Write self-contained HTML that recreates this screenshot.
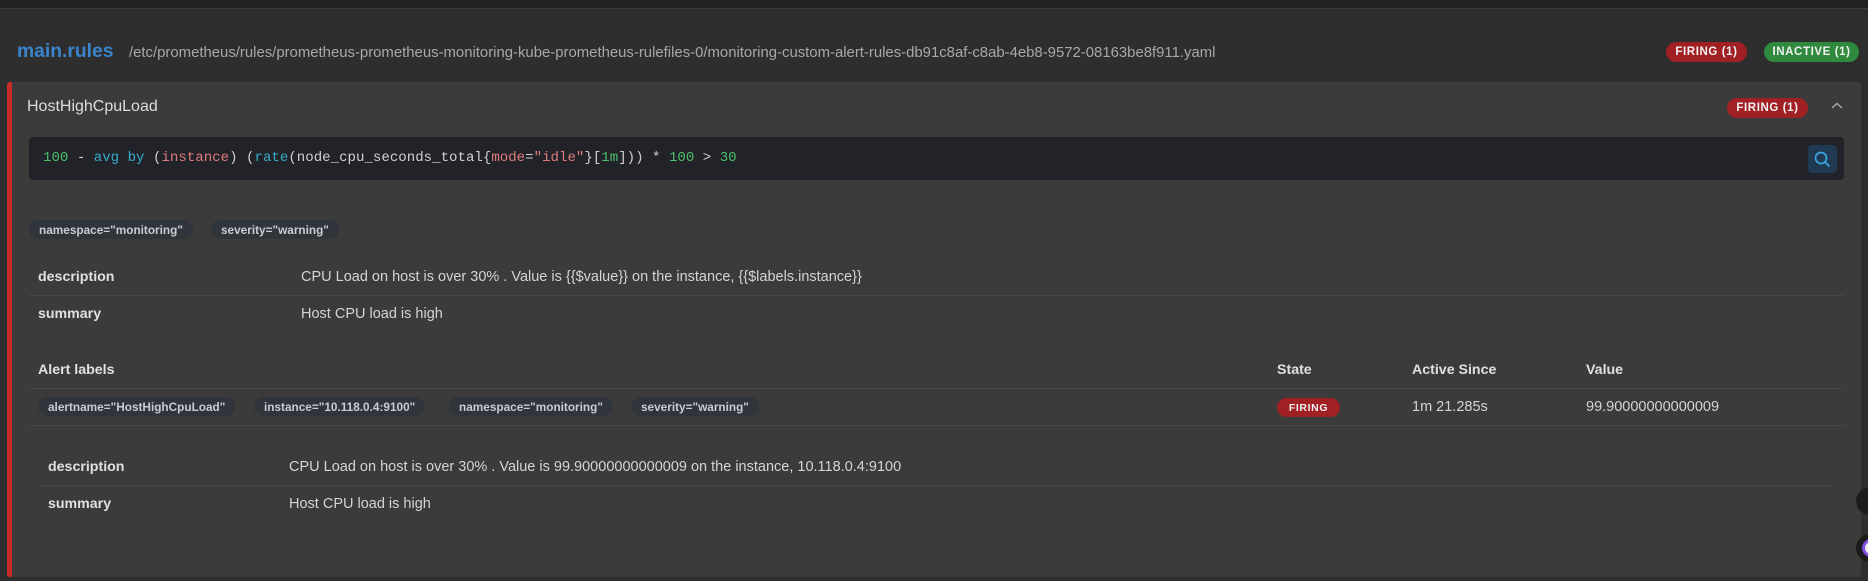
<!DOCTYPE html>
<html><head><meta charset="utf-8"><style>
*{margin:0;padding:0;box-sizing:border-box}
body{width:1868px;height:581px;background:#2e2e2e;font-family:"Liberation Sans",sans-serif;position:relative;overflow:hidden;color:#d8d8d8}
.a{position:absolute;white-space:nowrap}
.vc{transform:translateY(-50%)}
.badge{position:absolute;height:20px;border-radius:10px;color:#f2f2f2;font-size:11.5px;font-weight:bold;letter-spacing:.6px;display:flex;align-items:center;justify-content:center}
.red{background:#a02024}
.green{background:#2f8a3e}
.pill{position:absolute;height:19px;border-radius:10px;background:#30353c;color:#c8cbd0;font-size:11.8px;font-weight:bold;display:flex;align-items:center;padding:0 10px;letter-spacing:0}
.k{font-size:14.2px;font-weight:bold;color:#e0e0e0}
.v{font-size:14.5px;color:#d4d4d4}
.line{position:absolute;height:1px;background:#474747}
.mono{font-family:"Liberation Mono",monospace;font-size:14.1px}
</style></head><body>
<div class="a" style="left:0;top:0;width:1868px;height:8px;background:#222"></div>
<div class="a" style="left:0;top:8px;width:1868px;height:1px;background:#3c3c3c"></div>
<div class="a vc" style="left:17px;top:52px;font-size:19.3px;font-weight:bold;color:#3a84cc">main.rules</div>
<div class="a vc" style="left:129px;top:53px;font-size:14.9px;color:#a8a8a8">/etc/prometheus/rules/prometheus-prometheus-monitoring-kube-prometheus-rulefiles-0/monitoring-custom-alert-rules-db91c8af-c8ab-4eb8-9572-08163be8f911.yaml</div>
<div class="badge red" style="left:1666px;top:42px;width:81px">FIRING (1)</div>
<div class="badge green" style="left:1764px;top:42px;width:95px">INACTIVE (1)</div>

<div class="a" style="left:7px;top:82px;width:1854px;height:495px;background:#3b3b3b;border-left:5px solid #c92a2a;border-radius:3px"></div>
<div class="a vc" style="left:27px;top:107px;font-size:16px;color:#dcdcdc">HostHighCpuLoad</div>
<div class="badge red" style="left:1727px;top:98px;width:81px">FIRING (1)</div>
<svg class="a" style="left:1831px;top:102px" width="12" height="8" viewBox="0 0 12 8"><path d="M1 6 L6 1.5 L11 6" fill="none" stroke="#aaa" stroke-width="1.4"/></svg>

<div class="a" style="left:29px;top:137px;width:1815px;height:43px;background:#212328;border-radius:4px"></div>
<div class="a vc mono" style="left:43px;top:158px;color:#d0d0d0"><span style="color:#4cbf6b">100</span> - <span style="color:#38a9c9">avg</span> <span style="color:#38a9c9">by</span> (<span style="color:#e07c7c">instance</span>) (<span style="color:#38a9c9">rate</span>(node_cpu_seconds_total{<span style="color:#e07c7c">mode</span>=<span style="color:#e07c7c">"idle"</span>}[<span style="color:#4cbf6b">1m</span>])) * <span style="color:#4cbf6b">100</span> &gt; <span style="color:#4cbf6b">30</span></div>
<div class="a" style="left:1808px;top:145px;width:29px;height:28px;background:#1f3a52;border-radius:4px"></div>
<svg class="a" style="left:1813px;top:150px" width="19" height="19" viewBox="0 0 19 19"><circle cx="8" cy="8" r="5.5" fill="none" stroke="#3aa8e0" stroke-width="1.7"/><path d="M12 12 L16.5 16.5" stroke="#3aa8e0" stroke-width="1.8"/></svg>

<div class="pill" style="left:29px;top:220px">namespace="monitoring"</div>
<div class="pill" style="left:211px;top:220px">severity="warning"</div>

<div class="a vc k" style="left:38px;top:277px">description</div>
<div class="a vc v" style="left:301px;top:277px">CPU Load on host is over 30% . Value is {{$value}} on the instance, {{$labels.instance}}</div>
<div class="line" style="left:29px;top:295px;width:1815px"></div>
<div class="a vc k" style="left:38px;top:314px">summary</div>
<div class="a vc v" style="left:301px;top:314px">Host CPU load is high</div>

<div class="a vc k" style="left:38px;top:370px">Alert labels</div>
<div class="a vc k" style="left:1277px;top:370px">State</div>
<div class="a vc k" style="left:1412px;top:370px">Active Since</div>
<div class="a vc k" style="left:1586px;top:370px">Value</div>
<div class="line" style="left:29px;top:388px;width:1815px"></div>
<div class="pill" style="left:38px;top:397px">alertname="HostHighCpuLoad"</div>
<div class="pill" style="left:254px;top:397px">instance="10.118.0.4:9100"</div>
<div class="pill" style="left:449px;top:397px">namespace="monitoring"</div>
<div class="pill" style="left:631px;top:397px">severity="warning"</div>
<div class="badge red" style="left:1277px;top:398px;width:63px;height:19px;font-size:10.5px">FIRING</div>
<div class="a vc v" style="left:1412px;top:407px">1m 21.285s</div>
<div class="a vc v" style="left:1586px;top:407px">99.90000000000009</div>
<div class="line" style="left:29px;top:425px;width:1815px"></div>

<div class="a vc k" style="left:48px;top:467px">description</div>
<div class="a vc v" style="left:289px;top:467px">CPU Load on host is over 30% . Value is 99.90000000000009 on the instance, 10.118.0.4:9100</div>
<div class="line" style="left:38px;top:485px;width:1796px"></div>
<div class="a vc k" style="left:48px;top:504px">summary</div>
<div class="a vc v" style="left:289px;top:504px">Host CPU load is high</div>

<div class="a" style="left:1856px;top:487px;width:28px;height:28px;border-radius:14px;background:#1c1c1c"></div>
<div class="a" style="left:1856px;top:534px;width:28px;height:28px;border-radius:14px;background:#1c1c1c"></div>
<div class="a" style="left:1862px;top:539px;width:18px;height:18px;border-radius:9px;border:3px solid #7b4fe0;background:#eee"></div>
</body></html>
